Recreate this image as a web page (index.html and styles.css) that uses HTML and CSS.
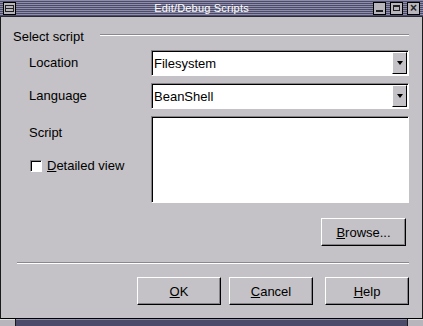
FILE: index.html
```html
<!DOCTYPE html>
<html lang="en">
<head>
    <meta charset="utf-8"/>
    <title>Edit/Debug Scripts</title>
    <link rel="stylesheet" href="styles.css">
</head>
<body>
    <div class="window">
        <div class="titlebar">
            <div class="tb-btn menu-btn"><span class="menu-icon"></span></div>
            <div class="title">Edit/Debug Scripts</div>
            <div class="tb-right">
                <div class="tb-btn"><span class="min-icon"></span></div>
                <div class="tb-btn"><span class="max-icon"></span></div>
                <div class="tb-btn"><span class="close-icon">&#215;</span></div>
            </div>
        </div>

        <div class="content">
            <div class="group-head">
                <span>Select script</span>
                <div class="group-line"></div>
            </div>

            <div class="form-grid">
                <label class="lbl">Location</label>
                <div class="combo">
                    <span class="combo-text">Filesystem</span>
                    <span class="combo-btn"><span class="arrow"></span></span>
                </div>

                <label class="lbl">Language</label>
                <div class="combo">
                    <span class="combo-text">BeanShell</span>
                    <span class="combo-btn"><span class="arrow"></span></span>
                </div>

                <div class="script-side">
                    <label class="lbl">Script</label>
                    <div class="check-row">
                        <span class="checkbox"></span>
                        <span><u>D</u>etailed view</span>
                    </div>
                </div>
                <div class="script-box"></div>
            </div>

            <div class="browse-row">
                <button class="btn browse"><u>B</u>rowse...</button>
            </div>

            <div class="separator"></div>

            <div class="button-row">
                <button class="btn"><u>O</u>K</button>
                <button class="btn"><u>C</u>ancel</button>
                <button class="btn help"><u>H</u>elp</button>
            </div>
        </div>

        <div class="bottombar">
            <div class="handle"></div>
            <div class="bar"></div>
            <div class="handle"></div>
        </div>
    </div>
</body>
</html>
```

FILE: styles.css
```css
body {
    margin: 0;
    padding: 0;
    font-family: "Liberation Sans", Arial, sans-serif;
    font-size: 13px;
    color: #000;
    background-color: #c4c2c6;
}
.window {
    width: 423px;
    height: 326px;
    display: flex;
    flex-direction: column;
    background-color: #c4c2c6;
    overflow: hidden;
}

/* title bar */
.titlebar {
    height: 16px;
    flex-shrink: 0;
    display: flex;
    align-items: center;
    padding: 0 3px;
    background: repeating-linear-gradient(#8e8eaa 0, #8e8eaa 1px, #4c4c6a 1px, #4c4c6a 2px);
    border-bottom: 1px solid #2a2a3a;
}
.title {
    flex: 1;
    text-align: center;
    color: #fff;
    font-family: "Liberation Sans", Arial, sans-serif;
    font-size: 11px;
    letter-spacing: 0.2px;
    padding-left: 14px;
}
.tb-right {
    display: flex;
    gap: 4px;
}
.tb-btn {
    width: 11px;
    height: 11px;
    background-color: #b8b6bc;
    border: 1px solid #000;
    display: flex;
    align-items: center;
    justify-content: center;
}
.menu-icon {
    width: 7px;
    height: 5px;
    border: 1px solid #222;
    background: linear-gradient(#b8b6bc 2px, #222 2px, #222 3px, #b8b6bc 3px);
}
.min-icon {
    width: 7px;
    height: 2px;
    background-color: #222;
    margin-top: 5px;
}
.max-icon {
    width: 5px;
    height: 3px;
    border: 1px solid #222;
    border-top-width: 2px;
}
.close-icon {
    font-size: 12px;
    font-weight: bold;
    line-height: 10px;
    color: #222;
}

/* dialog content */
.content {
    flex: 1;
    border-left: 1px solid #1a1a1a;
    border-right: 1px solid #1a1a1a;
    border-bottom: 1px solid #000;
    padding: 12px 13px 0 12px;
}
.group-head {
    display: flex;
    align-items: center;
    height: 15px;
}
.group-line {
    flex: 1;
    margin-left: 16px;
    border-top: 1px solid #8a888c;
    border-bottom: 1px solid #fff;
    margin-top: -3px;
}
.form-grid {
    display: grid;
    grid-template-columns: 122px 258px;
    grid-template-rows: 26px 26px 87px;
    row-gap: 7px;
    margin-top: 6px;
    margin-left: 16px;
}
.lbl {
    align-self: center;
    margin-top: -1px;
}
.combo {
    display: flex;
    align-items: center;
    background-color: #fff;
    border-top: 1px solid #858387;
    border-left: 1px solid #858387;
    border-right: 1px solid #fff;
    border-bottom: 1px solid #fff;
    box-shadow: inset 1px 1px 0 #000;
}
.combo-text {
    flex: 1;
    padding-left: 2px;
}
.combo-btn {
    width: 13px;
    height: 20px;
    margin-right: 1px;
    background-color: #c4c2c6;
    border-top: 1px solid #fff;
    border-left: 1px solid #fff;
    border-right: 1px solid #000;
    border-bottom: 1px solid #000;
    display: flex;
    align-items: center;
    justify-content: center;
}
.arrow {
    width: 0;
    height: 0;
    border-left: 3px solid transparent;
    border-right: 3px solid transparent;
    border-top: 4px solid #000;
}
.script-side {
    display: flex;
    flex-direction: column;
}
.script-side .lbl {
    align-self: flex-start;
    margin-top: 9px;
}
.check-row {
    display: flex;
    align-items: center;
    gap: 5px;
    margin-top: 18px;
    margin-left: 1px;
}
.checkbox {
    width: 10px;
    height: 10px;
    background-color: #fff;
    border-top: 1px solid #858387;
    border-left: 1px solid #858387;
    border-right: 1px solid #fff;
    border-bottom: 1px solid #fff;
    box-shadow: inset 1px 1px 0 #000;
}
.script-box {
    height: 87px;
    background-color: #fff;
    border-top: 1px solid #858387;
    border-left: 1px solid #858387;
    border-right: 1px solid #fff;
    border-bottom: 1px solid #fff;
    box-shadow: inset 1px 1px 0 #000;
    box-sizing: border-box;
}

/* buttons */
.btn {
    width: 85px;
    height: 28px;
    font-family: "Liberation Sans", Arial, sans-serif;
    font-size: 13px;
    color: #000;
    background-color: #c4c2c6;
    border-top: 1px solid #fff;
    border-left: 1px solid #fff;
    border-right: 1px solid #000;
    border-bottom: 1px solid #000;
    box-shadow: inset -1px -1px 0 #858387;
    padding: 0;
}
.browse-row {
    display: flex;
    justify-content: flex-end;
    margin-top: 15px;
    padding-right: 3px;
}
.separator {
    margin: 16px 0 0 4px;
    border-top: 1px solid #8a888c;
    border-bottom: 1px solid #fff;
}
.button-row {
    display: flex;
    justify-content: flex-end;
    gap: 8px;
    margin-top: 13px;
}
.button-row .btn {
    width: 84px;
    height: 28px;
}
.button-row .help {
    margin-left: 4px;
}

/* bottom frame */
.bottombar {
    height: 7px;
    flex-shrink: 0;
    display: flex;
    gap: 1px;
    background-color: #1a1a1a;
}
.handle {
    width: 15px;
    background-color: #b8b6bc;
    border-top: 1px solid #e0e0e0;
}
.bar {
    flex: 1;
    background-color: #4c4c6a;
    border-top: 1px solid #8e8eaa;
}
```
